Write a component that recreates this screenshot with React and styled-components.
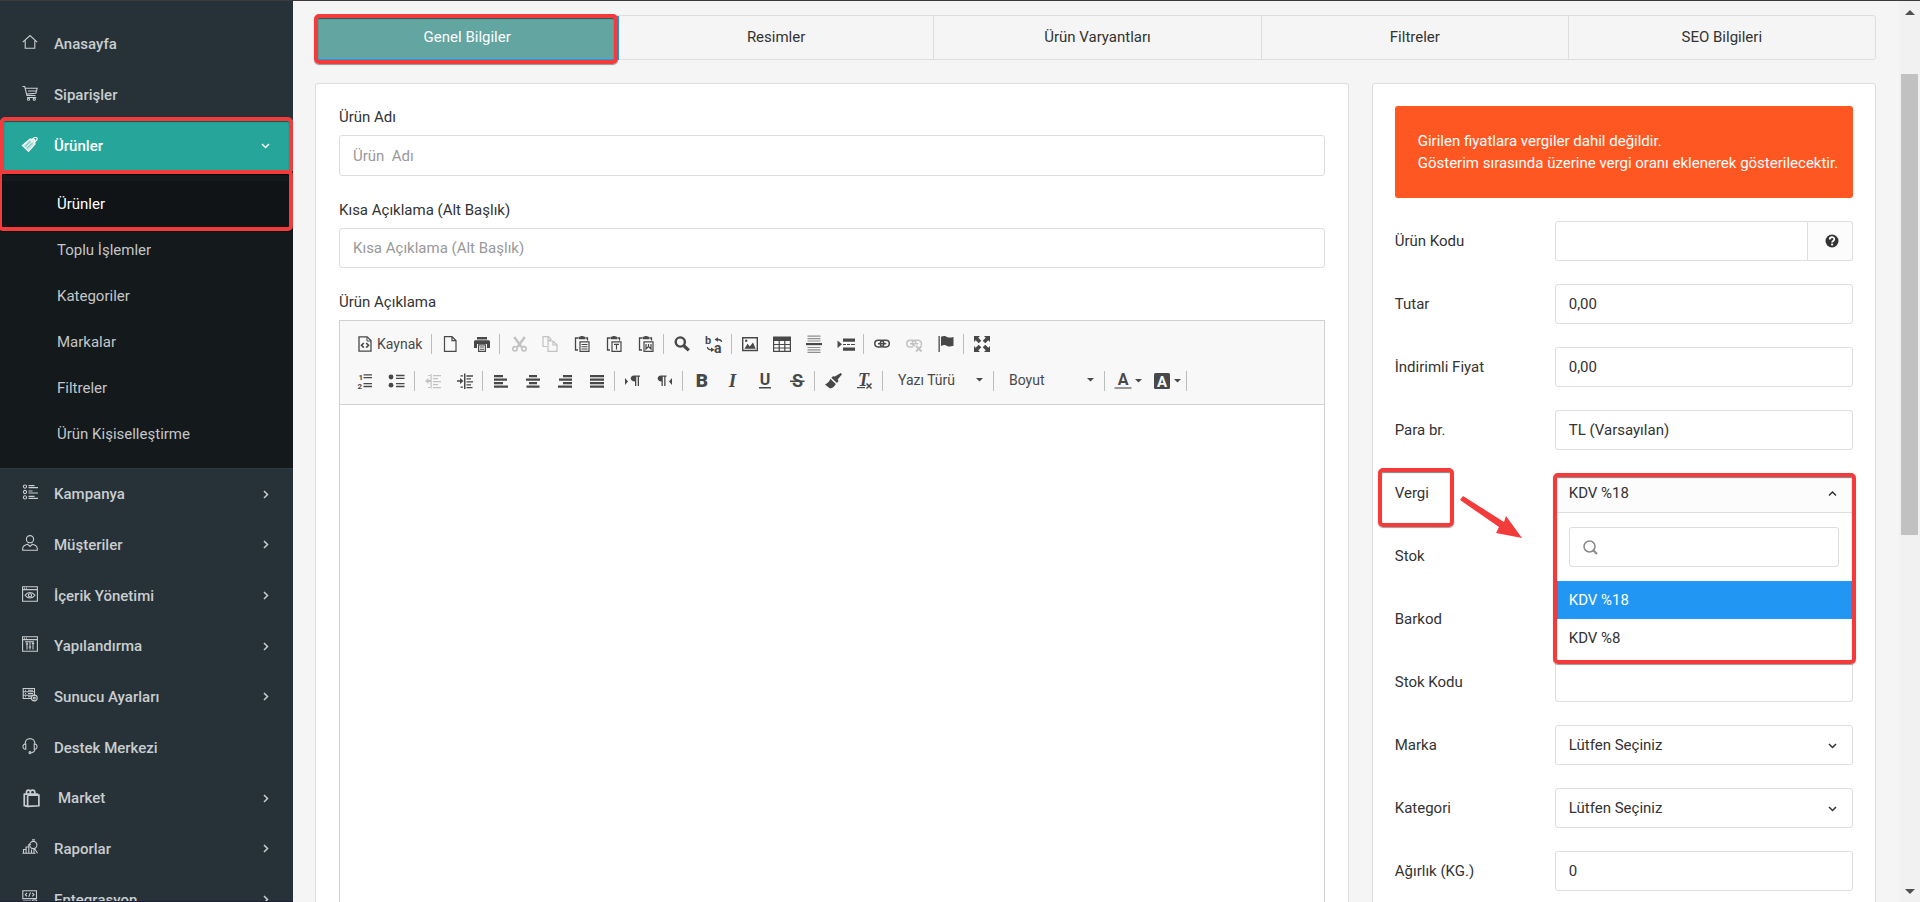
import React, { useState } from "react";
import styled, { createGlobalStyle } from "styled-components";

const GlobalStyle = createGlobalStyle`
    * {
        box-sizing: border-box;
    }
    body {
        margin: 0;
        overflow: hidden;
        background-color: #f5f5f5;
    }
    body, input, select, button, textarea {
        font-family: Roboto, "Liberation Sans", sans-serif;
        font-size: 15px;
        line-height: 22px;
        color: #333;
    }
`;

const Page = styled.div`
    display: flex;
    height: 100vh;
    overflow: hidden;
    border-top: 1px solid #3c3a3d;
`;

/* ---- sidebar ---- */

const Sidebar = styled.nav`
    flex: 0 0 293px;
    padding-top: 17px;
    overflow: hidden;
    background-color: #263238;
    border-bottom: 1px solid #1f2038;
`;

const MenuList = styled.ul`
    display: grid;
    grid-auto-rows: 1fr;
    height: ${props => props.$height}px;
    margin: 0;
    padding: 0;
    list-style: none;
`;

const MenuItem = styled.li`
    position: relative;
    display: flex;
`;

const MenuLink = styled.a`
    flex: 1;
    display: flex;
    align-items: center;
    gap: ${props => props.$wide ? '18px' : '16px'};
    padding: 0 23px 0 22px;
    font-weight: 500;
    color: ${props => props.$active ? '#fff' : '#c9cdcf'};
    background-color: ${props => props.$active ? '#26a69a' : 'transparent'};
    text-decoration: none;

    svg:first-child {
        margin-bottom: ${props => props.$wide ? '0' : '4px'};
    }
    svg:last-child {
        margin-left: auto;
    }
`;

const SubMenu = styled.ul`
    margin: 0;
    padding: 10px 0 11px;
    list-style: none;
    background-color: #14191c;
    border-bottom: 1px solid #303b41;
`;

const SubItem = styled.li`
    position: relative;
    background-color: ${props => props.$active ? '#101416' : 'transparent'};
`;

const SubLink = styled.a`
    display: block;
    padding: 12px 24px 12px 57px;
    color: ${props => props.$active ? '#fff' : '#c4c6c7'};
    text-decoration: none;
`;

const Highlight = styled.span`
    position: absolute;
    z-index: 5;
    inset: ${props => props.$inset};
    border: 4px solid #f43b3b;
    border-radius: 5px;
    box-shadow: 0 1px 1px rgba(0, 0, 0, 0.4), inset 0 1px 1px rgba(0, 0, 0, 0.5);
    pointer-events: none;
`;

/* ---- content ---- */

const Content = styled.main`
    flex: 1;
    min-width: 0;
    padding: 14px 23px 0 22px;
`;

const Tabs = styled.div`
    display: grid;
    grid-template-columns: 304fr 315fr 329fr 307fr 307fr;
    height: 45px;
    margin-bottom: 23px;
    border: 1px solid #ddd;
    border-radius: 3px;
`;

const Tab = styled.button`
    position: relative;
    padding: 0 0 2px;
    border: none;
    border-right: 1px solid #ddd;
    background-color: transparent;
    cursor: pointer;

    &:last-child {
        border-right: none;
    }
    ${props => props.$active && `
        color: #fff;
        background-color: #62a5a1;
        border-right-color: #2196f3;
        box-shadow: 0 1px 0 #2196f3;
    `}
`;

const Columns = styled.div`
    display: grid;
    grid-template-columns: 41fr 20fr;
    gap: 23px;
`;

const Card = styled.section`
    min-width: 0;
    padding: 22px ${props => props.$narrow ? '22px' : '23px'};
    border: 1px solid #ddd;
    border-radius: 3px;
    background-color: #fff;
`;

const Group = styled.div`
    display: flex;
    flex-direction: column;
    gap: 7px;
    margin-bottom: 23px;
`;

const Input = styled.input`
    width: 100%;
    min-width: 0;
    height: ${props => props.$tall ? '41px' : '40px'};
    padding: 0 13px;
    border: 1px solid #ddd;
    border-radius: 3px;
    background-color: #fff;
    outline: none;

    &::placeholder {
        color: #999;
        opacity: 1;
    }
`;

/* ---- editor ---- */

const Editor = styled.div`
    border: 1px solid #d1d1d1;
`;

const Toolbar = styled.div`
    display: flex;
    flex-direction: column;
    gap: 5px;
    padding: 7px 9px;
    border-bottom: 1px solid #d1d1d1;
    background-color: #f8f8f8;
`;

const ToolRow = styled.div`
    display: flex;
    align-items: center;
    height: 32px;
`;

const ToolGroup = styled.div`
    display: flex;
    align-items: center;
    height: 20px;
    padding-right: ${props => props.$last ? '0' : '1px'};
    margin-right: 2px;
    border-right: ${props => props.$last ? 'none' : '1px solid #bcbcbc'};
`;

const ToolButton = styled.button`
    display: flex;
    align-items: center;
    gap: 4px;
    height: 32px;
    padding: 0 8px;
    border: none;
    background: none;
    font-size: 14px;
    color: #484848;
    opacity: ${props => props.disabled ? 0.3 : 1};

    svg:nth-child(2) {
        margin-right: -4px;
    }
`;

const Combo = styled.button`
    display: flex;
    align-items: center;
    justify-content: space-between;
    width: 107px;
    height: 32px;
    padding: 0 9px 2px 13px;
    border: none;
    background: none;
    font-size: 14px;
    color: #484848;
`;

const EditorArea = styled.textarea`
    display: block;
    width: 100%;
    height: 560px;
    padding: 20px;
    border: none;
    outline: none;
    resize: none;
`;

/* ---- right form ---- */

const Form = styled.div`
    display: flex;
    flex-direction: column;
    gap: 23px;
`;

const Alert = styled.div`
    padding: 24px 12px 24px 23px;
    border-radius: 3px;
    color: #fff;
    background-color: #ff5722;
`;

const Row = styled.div`
    display: grid;
    grid-template-columns: 160px 1fr;
    align-items: center;
`;

const LabelCell = styled.div`
    position: relative;
    justify-self: start;
`;

const Field = styled.div`
    position: relative;
    display: flex;
    align-items: center;

    > svg {
        position: absolute;
        right: 16px;
        pointer-events: none;
    }
`;

const CodeInput = styled(Input)`
    border-radius: 3px 0 0 3px;
`;

const Addon = styled.button`
    flex: 0 0 45px;
    display: flex;
    align-items: center;
    justify-content: center;
    height: 40px;
    padding: 0 0 0 4px;
    border: 1px solid #ddd;
    border-left: none;
    border-radius: 0 3px 3px 0;
    background-color: #fcfcfc;
`;

const Select = styled.select`
    width: 100%;
    height: 40px;
    padding: 0 13px;
    border: 1px solid #ddd;
    border-radius: 3px;
    background-color: #fff;
    appearance: none;
    outline: none;
`;

const SelectButton = styled.button`
    width: 100%;
    height: 40px;
    padding: 0 13px;
    border: 1px solid #ddd;
    background-color: #fcfcfc;
    text-align: left;
`;

const Dropdown = styled.div`
    position: absolute;
    z-index: 4;
    top: 40px;
    left: 0;
    right: 0;
    padding-bottom: 7px;
    background-color: #fff;
`;

const SearchBox = styled.div`
    display: flex;
    align-items: center;
    height: 40px;
    margin: 14px;
    padding-left: 13px;
    border: 1px solid #ddd;
    border-radius: 3px;
`;

const SearchInput = styled.input`
    flex: 1;
    min-width: 0;
    padding: 0 10px;
    border: none;
    outline: none;
    background: none;
`;

const Options = styled.ul`
    margin: 0;
    padding: 0;
    list-style: none;
`;

const Option = styled.li`
    padding: 8px 14px;
    color: ${props => props.$selected ? '#fff' : '#333'};
    background-color: ${props => props.$selected ? '#2196f3' : 'transparent'};
    cursor: pointer;
`;

const ArrowSvg = styled.svg`
    position: absolute;
    z-index: 5;
    top: 14px;
    left: 65px;
`;

/* ---- scrollbar ---- */

const ScrollTrack = styled.div`
    flex: 0 0 21px;
    display: flex;
    flex-direction: column;
    align-items: center;
    justify-content: space-between;
    padding: 9px 0 8px;
    background-color: #f1f1f1;
`;

const ScrollSpace = styled.div`
    flex: 1;
    padding-top: 59px;
`;

const ScrollThumb = styled.div`
    width: 17px;
    height: 461px;
    background-color: #c1c1c1;
`;

/* line icons of the sidebar, 16x16 */
const menuIcons = {
    home: <path d="M.8 8.2 8 1.6l7.2 6.6M3.2 6.5v7.8h9.6V6.5" />,
    cart: <>
        <path d="M.5 1.5h2.2l2.2 9h8.6M3.2 3.3h12l-1.3 4.9-9.6.9M6 6h8.6" />
        <path d="M5.2 12.5h9" />
        <circle cx="6.5" cy="14.2" r="1.1" />
        <circle cx="12.3" cy="14.2" r="1.1" />
    </>,
    tag: <>
        <path d="M.5 9.5 8 3l4.600.4.4 4.600-6.500 7.500z" fill="currentColor" fillOpacity="0.75" />
        <path d="m2.600 10.800 5.700-5.400M4.600 12.800l5.800-5.600" stroke="#26a69a" strokeWidth="0.7" />
        <path d="M10 6.200c-.8-2.400 1.800-5.400 4.200-4.600 2 .8.8 3.600-2.800 4.900" />
    </>,
    list: <>
        <circle cx="3" cy="2.6" r="1.6" />
        <circle cx="3" cy="8" r="1.6" />
        <circle cx="3" cy="13.4" r="1.6" />
        <path d="M6.5 1.6h6M6.5 3.6H16M6.5 7h4M6.5 9H16M6.5 12.4h6M6.5 14.4H16" />
    </>,
    user: <>
        <circle cx="8" cy="4.2" r="3.6" />
        <path d="M.7 15.3v-1.8c0-2 2.4-3.6 5-4.2L8 11.5l2.3-2.2c2.600.6 5 2.200 5 4.200v1.800z" />
    </>,
    eye: <>
        <path d="M.6.8h14.800v14.400H.6zM.6 3.600h14.800M2 2.200h1M4 2.200h1" />
        <path d="M3 9.300c2.600-3.800 7.400-3.800 10 0-2.600 3.600-7.400 3.600-10 0z" />
        <circle cx="8" cy="9.300" r="1.600" />
    </>,
    config: <>
        <path d="M.6.8h14.800v14.400H.6zM.6 3.600h14.800M2 2.200h1M4 2.200h1" />
        <path d="M5 5.500v8M8 5.500v8M11 5.500v8M3.800 8h2.400M6.800 11h2.400M9.800 7.500h2.400M3 5.800h9" />
    </>,
    server: <>
        <path d="M1.200 1.500h11.300v3.300H1.200zM1.200 4.800h11.300v3.400H1.200zM9 11.500H1.200V8.200h8M3 3.200h1M6 3.200h5M3 6.500h1M6 6.500h5M3 9.800h1M6 9.800h3" />
        <circle cx="12.300" cy="11" r="2.900" />
        <circle cx="12.300" cy="11" r="1" />
    </>,
    headset: <>
        <path d="M3.200 6V5.500C3.200 2.600 5.300.6 8 .6s4.800 2 4.800 4.900V6M12.800 11.300c0 2-1.400 3.200-3.600 3.400" />
        <path d="M3.800 6c-1.800-.2-2.800 1-2.800 2.700s1 2.800 2.800 2.600zM12.200 6c1.800-.2 2.800 1 2.800 2.700s-1 2.800-2.800 2.600z" />
        <circle cx="8" cy="14.600" r="1" />
    </>,
    market: <>
        <path d="M1.500 4.500h12.800M2 4.500v10.300l3 .7V5.500M5 5.500h10v9.400l-10 .6M4 4.300V3c0-2.600 3.400-2.600 3.400 0v1.500M7.400 3c0-2.600 4-2.600 4 0v1.500" strokeWidth="1.500" />
    </>,
    chart: <>
        <path d="M.5 14.300h13M1.500 14V10.500h2.600V14M4.100 10.500V8h2.700v6M6.800 8.300V5.500h2M9.500 14v-3.500" />
        <circle cx="11.300" cy="6" r="3.600" />
        <path d="m12.500 9.500 3 4.800M10 .9h3M12 9.800v4.200" />
    </>,
    code: <>
        <path d="M.8.800h13.700v7.800H.800zM5 3 3.300 4.700 5 6.400M10.300 3 12 4.700l-1.700 1.700M8.500 2.500l-1.700 4.400M1 11h8M1 13h8M3 15h6" />
        <circle cx="12.500" cy="12.500" r="2.700" />
    </>,
};

/* editor toolbar icons, 16x16 */
const toolIcons = {
    source: <>
        <path d="M2 .8h8.200L14 4.500v10.700H2z" fill="none" stroke="currentColor" strokeWidth="1.300" />
        <path d="M10 1v4h4" fill="none" stroke="currentColor" />
        <path d="M6.800 7 4.500 9.300l2.300 2.300M9.200 7l2.300 2.300-2.300 2.300" fill="none" stroke="currentColor" strokeWidth="1.600" />
    </>,
    page: <path d="M2.500.7h7.500L14 4.600v10.700H2.500zM10 .7v4h4" fill="none" stroke="currentColor" strokeWidth="1.200" />,
    print: <>
        <path d="M3 1h10v2.500H3zM1.500 4.300h13c.8 0 1.500.6 1.500 1.400V12h-3V8H3v4H0V5.700c0-.8.7-1.400 1.500-1.400z" />
        <path d="M4.600 8.800h6.800v6.500H4.600z" fill="none" stroke="currentColor" strokeWidth="1.200" />
        <path d="M6 10.500h4v1H6zM6 12.700h4v1H6z" />
    </>,
    cut: <>
        <path d="M4.200 1 11.500 11M14.800 1 7.500 11" fill="none" stroke="currentColor" strokeWidth="2.400" />
        <circle cx="5" cy="12.800" r="2.200" fill="none" stroke="currentColor" strokeWidth="1.600" />
        <circle cx="14" cy="12.800" r="2.200" fill="none" stroke="currentColor" strokeWidth="1.600" />
    </>,
    copy: <path d="M5 10.500H1V.7h5.500l3 3M6 .8v3.400h3M6 5h5l4 3.800v6.500H6zM11 5v4h4" fill="none" stroke="currentColor" strokeWidth="1.200" />,
    paste: <>
        <path d="M4 2H1.500v12H4M12 2h1.500v2.500" fill="none" stroke="currentColor" strokeWidth="1.300" />
        <path d="M4.500.800h1.500L7 0h2l1 .800h1.500v2.500h-7z" />
        <path d="M6 5.800h9v9.600H6z" fill="none" stroke="currentColor" strokeWidth="1.200" />
        <path d="M7.500 8h6v1h-6zM7.500 10.200h6v1h-6zM7.500 12.400h6v1h-6z" />
    </>,
    pasteText: <>
        <path d="M4 2H1.500v12H4M12 2h1.500v2.500" fill="none" stroke="currentColor" strokeWidth="1.300" />
        <path d="M4.500.800h1.500L7 0h2l1 .800h1.500v2.500h-7z" />
        <path d="M6 5.800h9v9.600H6zM8 8.300h5M10.500 8.300v5.200" fill="none" stroke="currentColor" strokeWidth="1.200" />
    </>,
    pasteWord: <>
        <path d="M4 2H1.500v12H4M12 2h1.500v2.500" fill="none" stroke="currentColor" strokeWidth="1.300" />
        <path d="M4.500.800h1.500L7 0h2l1 .800h1.500v2.500h-7z" />
        <path d="M6 5.800h9v9.600H6zM8 8v5l2.500-2.500L13 13V8M10.500 8v3" fill="none" stroke="currentColor" strokeWidth="1.200" />
    </>,
    find: <>
        <circle cx="6.300" cy="6" r="4.600" fill="none" stroke="currentColor" strokeWidth="2.400" />
        <path d="m9.800 9.800 5 4.600" fill="none" stroke="currentColor" strokeWidth="3.200" />
    </>,
    replace: <>
        <text x="-1" y="8" fontSize="11" fontWeight="700">b</text>
        <text x="8" y="16.500" fontSize="14" fontWeight="700">a</text>
        <path d="M15.500 6c0-2-1.500-2.500-4-2.500M1.500 11c0 2 1.500 2.800 4 2.800" fill="none" stroke="currentColor" strokeWidth="1.300" />
        <path d="m12 1.200-3.500 2.300L12 5.800zM5 11.500l3.500 2.300L5 16z" />
    </>,
    image: <>
        <path d="M.7 1.700h14.600v12.800H.7z" fill="none" stroke="currentColor" strokeWidth="1.400" />
        <path d="m2.500 12.800 3-5 2.300 2.700L11 6.500l2.700 6.300z" />
        <circle cx="4.200" cy="4.800" r="1.200" />
    </>,
    table: <>
        <path d="M-1 .5h18V5H-1z" />
        <path d="M-.4 5v10.300h16.800V5M-.4 8.500h16.800M-.4 12h16.800M5.200 5v10.300M10.800 5v10.300" fill="none" stroke="currentColor" strokeWidth="1.200" />
    </>,
    rule: <>
        <path d="M1.500-.500h13v1.200h-13zM1.500 2h13v1.200h-13zM1.500 4.500h13v1h-13zM1.500 11h13v1h-13zM1.500 13.300h13v1.200h-13zM1.500 15.700h13V17h-13z" opacity="0.6" />
        <path d="M0 7h16v2.200H0z" />
    </>,
    pageBreak: <>
        <path d="M-.500 4.500 4 8.300-.500 12zM5 2.500h12v3.300H5zM5 11.500h12v3.300H5zM5 8h3v1H5zM9 8h3v1H9zM13 8h4v1h-4z" />
    </>,
    link: <>
        <rect x=".8" y="4.300" width="9" height="6.600" rx="3.300" fill="none" stroke="currentColor" strokeWidth="1.500" />
        <rect x="6.300" y="4.300" width="9" height="6.600" rx="3.300" fill="none" stroke="currentColor" strokeWidth="1.500" />
        <path d="M4 6.900h8.200v1.500H4z" />
    </>,
    unlink: <>
        <path d="M7 11H4.100C-.3 11-.3 4.300 4.100 4.300h2.400c2 0 3.300 1.400 3.300 3M9 10c-4-1-3.500-5.700.7-5.700H12c3 0 4.300 3 3 5M4 7.700h8" fill="none" stroke="currentColor" strokeWidth="1.500" />
        <path d="m10 10 5.500 5.500M15.500 10 10 15.500" fill="none" stroke="currentColor" strokeWidth="1.800" />
    </>,
    flag: <path d="M.5 0h1.300v16H.5zM3 .800c3-1.500 4.500-.8 6 .2 1.500.8 3.500.8 6.500 0v8.700c-3 1-5 1-6.500.2-1.600-1-3-1.300-6 0z" />,
    maximize: <path d="M0 0h6L4.300 1.700l3 3-2.600 2.600-3-3L0 6zM16 0v6l-1.700-1.700-3 3-2.600-2.600 3-3L10 0zM0 16v-6l1.700 1.700 3-3 2.600 2.600-3 3L6 16zM16 16h-6l1.700-1.700-3-3 2.600-2.600 3 3L16 10z" />,
    numbered: <>
        <text x="1.500" y="6.500" fontSize="8" fontWeight="700">1</text>
        <text x=".5" y="15.800" fontSize="8" fontWeight="700">2</text>
        <path d="M6.500 1.800H15M6.500 4.700H15M6.500 10.600H15M6.500 13.500H15" fill="none" stroke="currentColor" strokeWidth="1.300" />
    </>,
    bulleted: <>
        <circle cx="2" cy="4" r="2.400" />
        <circle cx="2" cy="12.200" r="2.400" />
        <path d="M7 2.500h8.500M7 5.300h8.500M7 10.700h8.500M7 13.500h8.500" fill="none" stroke="currentColor" strokeWidth="1.300" />
    </>,
    outdent: <>
        <path d="M5.500 1h1.200v14.500H5.500zM8 2h8v1.200H8zM8 5h5v1.200H8zM8 8h8v1.200H8zM8 11h5v1.200H8zM8 14h8v1.200H8z" />
        <path d="m0 8 3.500-3v2H6v2H3.500v2zM3 2h2v1H3zM3 14h2v1H3z" />
    </>,
    indent: <>
        <path d="M7 .5h1.500V16H7zM9.500 2.300H16v1.400H9.500zM9.500 5.200H14v1.400H9.500zM9.500 8.200H16v1.400H9.500zM9.500 11.200H14v1.400H9.500zM9.500 14h6v1.200h-6z" />
        <path d="M6.500 8 3 5v2.200H0v1.600h3V11zM3.500 2.300H6v1.200H3.500zM3.500 13.500H6v1.200H3.500z" />
    </>,
    left: <path d="M1 2h9v2.300H1zM1 5.500h13v2.300H1zM1 9h9v2.300H1zM1 12.500h14v2.300H1z" />,
    center: <path d="M4 2h8v2.300H4zM1 5.500h14v2.300H1zM4 9h8v2.300H4zM1.500 12.500h13v2.300h-13z" />,
    right: <path d="M6 2h9v2.300H6zM2 5.500h13v2.300H2zM6 9h9v2.300H6zM1 12.500h14v2.300H1z" />,
    justify: <path d="M1 2h14v2.300H1zM1 5.500h14v2.300H1zM1 9h14v2.300H1zM1 12.500h14v2.300H1z" />,
    ltr: <path d="m0 5 3 3.500L0 12zM15 2.500v1.200h-1v9.300h-1.300V3.700h-1.400V13H10V8.500C4.500 8.500 4.500 2.500 9 2.500z" />,
    rtl: <path d="m15 5-3 3.500 3 3.500zM9.500 2.500v1.200h-1v9.300H7.200V3.700H5.800V13H4.500V8.500C-.5 8.500-.5 2.500 4 2.500z" />,
    bold: <text x="9" y="14" fontSize="19" fontWeight="900" textAnchor="middle">B</text>,
    italic: <text x="7.500" y="14" fontSize="19" fontWeight="700" fontStyle="italic" fontFamily="Liberation Serif" textAnchor="middle">I</text>,
    underline: <>
        <text x="8" y="12" fontSize="16" fontWeight="700" textAnchor="middle">U</text>
        <path d="M2 14h12v1.500H2z" />
    </>,
    strike: <>
        <text x="8.500" y="14" fontSize="18" fontWeight="700" textAnchor="middle">S</text>
        <path d="M1 7.500h14.500V9H1z" />
    </>,
    brush: <path d="M15.800 0 17 1.300l-4.300 5.200L13.500 8 12 10 6.300 4.800 8 3.200l1.800.4zM5.300 5.700l5.500 5.200c-1.400 2.600-3.200 4.200-5.800 4.600L0 11.500c2.500-1.200 4.500-3 5.300-5.800z" />,
    removeFormat: <>
        <text x="6.500" y="13" fontSize="18" fontWeight="700" fontStyle="italic" fontFamily="Liberation Serif" textAnchor="middle">T</text>
        <path d="M0 14h8v1.200H0z" />
        <path d="m9.500 10.500 5 5M14.500 10.500l-5 5" fill="none" stroke="currentColor" strokeWidth="1.500" />
    </>,
    textColor: <>
        <text x="8" y="12" fontSize="16" fontWeight="700" textAnchor="middle">A</text>
        <path d="M-.5 14h17v2h-17z" opacity="0.55" />
    </>,
    bgColor: <>
        <rect width="16" height="16" rx="1.500" />
        <text x="8" y="13.500" fontSize="15" fontWeight="700" fill="#f8f8f8" textAnchor="middle">A</text>
    </>,
};

function MenuIcon({ name, size = 16 }) {
    return (
        <svg width={size} height={size} viewBox="0 0 16 16" fill="none" stroke="currentColor" strokeWidth="1.100" overflow="visible">
            {menuIcons[name]}
        </svg>
    );
}

function ToolIcon({ name }) {
    return (
        <svg width="16" height="16" viewBox="0 0 16 16" fill="currentColor" overflow="visible">
            {toolIcons[name]}
        </svg>
    );
}

function Chevron({ dir }) {
    const d = {
        right: "m3 1 3.500 3.500L3 8",
        down: "m1 3 3.500 3.500L8 3",
        up: "M1 6.500 4.500 3 8 6.500",
    };
    return (
        <svg width="9" height="9" viewBox="0 0 9 9" fill="none" stroke="currentColor" strokeWidth="1.500">
            <path d={d[dir]} />
        </svg>
    );
}

function Caret() {
    return (
        <svg width="7" height="4" viewBox="0 0 7 4">
            <path d="M0 0h7L3.500 3.500z" fill="#484848" />
        </svg>
    );
}

const topMenu = [
    { text: "Anasayfa", icon: "home" },
    { text: "Siparişler", icon: "cart" },
    { text: "Ürünler", icon: "tag", active: true },
];

const subMenu = ["Ürünler", "Toplu İşlemler", "Kategoriler", "Markalar", "Filtreler", "Ürün Kişiselleştirme"];

const bottomMenu = [
    { text: "Kampanya", icon: "list", arrow: true },
    { text: "Müşteriler", icon: "user", arrow: true },
    { text: "İçerik Yönetimi", icon: "eye", arrow: true },
    { text: "Yapılandırma", icon: "config", arrow: true },
    { text: "Sunucu Ayarları", icon: "server", arrow: true },
    { text: "Destek Merkezi", icon: "headset" },
    { text: "Market", icon: "market", arrow: true, wide: true },
    { text: "Raporlar", icon: "chart", arrow: true },
    { text: "Entegrasyon", icon: "code", arrow: true },
];

const tabs = ["Genel Bilgiler", "Resimler", "Ürün Varyantları", "Filtreler", "SEO Bilgileri"];

const toolRow1 = [
    ["page", "print"],
    ["cut", "copy", "paste", "pasteText", "pasteWord"],
    ["find", "replace"],
    ["image", "table", "rule", "pageBreak"],
    ["link", "unlink", "flag"],
    ["maximize"],
];

const toolRow2 = [
    ["numbered", "bulleted"],
    ["outdent", "indent"],
    ["left", "center", "right", "justify"],
    ["ltr", "rtl"],
    ["bold", "italic", "underline", "strike"],
    ["brush", "removeFormat"],
];

const disabledTools = ["cut", "copy", "unlink", "outdent"];

function ToolGroups({ groups, openEnd }) {
    return groups.map((group, i) => (
        <ToolGroup key={i} $last={openEnd && i === groups.length - 1}>
            {group.map(name => (
                <ToolButton key={name} type="button" aria-label={name} disabled={disabledTools.includes(name)}>
                    <ToolIcon name={name} />
                </ToolButton>
            ))}
        </ToolGroup>
    ));
}

function SideMenu() {
    return (
        <Sidebar>
            <MenuList $height={153}>
                {topMenu.map(item => (
                    <MenuItem key={item.text}>
                        <MenuLink href="#" $active={item.active}>
                            <MenuIcon name={item.icon} />
                            <span>{item.text}</span>
                            {item.active && <Chevron dir="down" />}
                        </MenuLink>
                        {item.active && <Highlight $inset="-3px 0" />}
                    </MenuItem>
                ))}
            </MenuList>
            <SubMenu>
                {subMenu.map((text, i) => (
                    <SubItem key={text} $active={i === 0}>
                        <SubLink href="#" $active={i === 0}>{text}</SubLink>
                        {i === 0 && <Highlight $inset="-11px 0 -4px -2px" />}
                    </SubItem>
                ))}
            </SubMenu>
            <MenuList $height={456}>
                {bottomMenu.map(item => (
                    <MenuItem key={item.text}>
                        <MenuLink href="#" $wide={item.wide}>
                            <MenuIcon name={item.icon} size={item.wide ? 18 : 16} />
                            <span>{item.text}</span>
                            {item.arrow && <Chevron dir="right" />}
                        </MenuLink>
                    </MenuItem>
                ))}
            </MenuList>
        </Sidebar>
    );
}

function TextEditor() {
    return (
        <Editor>
            <Toolbar>
                <ToolRow>
                    <ToolGroup>
                        <ToolButton type="button">
                            <ToolIcon name="source" />
                            <span>Kaynak</span>
                        </ToolButton>
                    </ToolGroup>
                    <ToolGroups groups={toolRow1} openEnd />
                </ToolRow>
                <ToolRow>
                    <ToolGroups groups={toolRow2} />
                    <ToolGroup>
                        <Combo type="button">Yazı Türü<Caret /></Combo>
                    </ToolGroup>
                    <ToolGroup>
                        <Combo type="button">Boyut<Caret /></Combo>
                    </ToolGroup>
                    <ToolGroup>
                        <ToolButton type="button" aria-label="Yazı Rengi">
                            <ToolIcon name="textColor" />
                            <Caret />
                        </ToolButton>
                        <ToolButton type="button" aria-label="Arka Plan Rengi">
                            <ToolIcon name="bgColor" />
                            <Caret />
                        </ToolButton>
                    </ToolGroup>
                </ToolRow>
            </Toolbar>
            <EditorArea id="aciklama" />
        </Editor>
    );
}

function FormRow({ id, label, children }) {
    return (
        <Row>
            <LabelCell><label htmlFor={id}>{label}</label></LabelCell>
            <Field>{children}</Field>
        </Row>
    );
}

function TaxRow() {
    const [tax, setTax] = useState("KDV %18");

    return (
        <Row>
            <LabelCell>
                <label htmlFor="vergi">Vergi</label>
                <Highlight $inset="-14px -25px -23px -17px" />
                <ArrowSvg width="64" height="44" viewBox="0 0 64 44">
                    <path d="M3 0 0 4l39 27-3 6 26 5L46 20l-2 6z" fill="#f43b3b" />
                </ArrowSvg>
            </LabelCell>
            <Field>
                <SelectButton id="vergi" type="button" aria-haspopup="listbox" aria-expanded="true">{tax}</SelectButton>
                <Chevron dir="up" />
                <Dropdown>
                    <SearchBox>
                        <svg width="15" height="15" viewBox="0 0 15 15" fill="none" stroke="#888" strokeWidth="1.500">
                            <circle cx="6.500" cy="6.500" r="5.500" />
                            <path d="m10 10 4 4" strokeWidth="2" />
                        </svg>
                        <SearchInput type="search" aria-label="Ara" />
                    </SearchBox>
                    <Options role="listbox">
                        {["KDV %18", "KDV %8"].map(option => (
                            <Option
                                key={option}
                                role="option"
                                aria-selected={option === tax}
                                $selected={option === tax}
                                onClick={() => setTax(option)}
                            >
                                {option}
                            </Option>
                        ))}
                    </Options>
                </Dropdown>
                <Highlight $inset="0 -3px -151px -2px" />
            </Field>
        </Row>
    );
}

function App() {
    const [activeTab, setActiveTab] = useState(0);

    return (
        <>
            <GlobalStyle />
            <Page>
                <SideMenu />
                <Content>
                    <Tabs role="tablist">
                        {tabs.map((text, i) => (
                            <Tab key={text} role="tab" $active={i === activeTab} onClick={() => setActiveTab(i)}>
                                {text}
                                {i === 0 && <Highlight $inset="-2px 0 -5px -2px" />}
                            </Tab>
                        ))}
                    </Tabs>
                    <Columns>
                        <Card>
                            <Group>
                                <label htmlFor="ad">Ürün Adı</label>
                                <Input id="ad" $tall placeholder="Ürün  Adı" />
                            </Group>
                            <Group>
                                <label htmlFor="kisa">Kısa Açıklama (Alt Başlık)</label>
                                <Input id="kisa" placeholder="Kısa Açıklama (Alt Başlık)" />
                            </Group>
                            <Group>
                                <label htmlFor="aciklama">Ürün Açıklama</label>
                                <TextEditor />
                            </Group>
                        </Card>
                        <Card $narrow>
                            <Form>
                                <Alert>
                                    Girilen fiyatlara vergiler dahil değildir.<br />
                                    Gösterim sırasında üzerine vergi oranı eklenerek gösterilecektir.
                                </Alert>
                                <FormRow id="kod" label="Ürün Kodu">
                                    <CodeInput id="kod" />
                                    <Addon type="button" aria-label="Yardım">
                                        <svg width="14" height="14" viewBox="0 0 14 14">
                                            <circle cx="7" cy="7" r="6.500" fill="#333" />
                                            <path d="M4.700 5.500C4.700 2.400 9.300 2.400 9.300 5.200 9.300 7 7.100 6.800 7.100 8.500" fill="none" stroke="#fff" strokeWidth="1.800" />
                                            <path d="M6.100 9.600h2v1.800h-2z" fill="#fff" />
                                        </svg>
                                    </Addon>
                                </FormRow>
                                <FormRow id="tutar" label="Tutar">
                                    <Input id="tutar" defaultValue="0,00" />
                                </FormRow>
                                <FormRow id="indirim" label="İndirimli Fiyat">
                                    <Input id="indirim" defaultValue="0,00" />
                                </FormRow>
                                <FormRow id="para" label="Para br.">
                                    <Input id="para" defaultValue="TL (Varsayılan)" />
                                </FormRow>
                                <TaxRow />
                                <FormRow id="stok" label="Stok">
                                    <Input id="stok" />
                                </FormRow>
                                <FormRow id="barkod" label="Barkod">
                                    <Input id="barkod" />
                                </FormRow>
                                <FormRow id="stokkodu" label="Stok Kodu">
                                    <Input id="stokkodu" />
                                </FormRow>
                                <FormRow id="marka" label="Marka">
                                    <Select id="marka"><option>Lütfen Seçiniz</option></Select>
                                    <Chevron dir="down" />
                                </FormRow>
                                <FormRow id="kategori" label="Kategori">
                                    <Select id="kategori"><option>Lütfen Seçiniz</option></Select>
                                    <Chevron dir="down" />
                                </FormRow>
                                <FormRow id="agirlik" label="Ağırlık (KG.)">
                                    <Input id="agirlik" defaultValue="0" />
                                </FormRow>
                            </Form>
                        </Card>
                    </Columns>
                </Content>
                <ScrollTrack>
                    <svg width="10" height="5" viewBox="0 0 10 5"><path d="m0 5 5-5 5 5z" fill="#505050" /></svg>
                    <ScrollSpace><ScrollThumb /></ScrollSpace>
                    <svg width="10" height="5" viewBox="0 0 10 5"><path d="m0 0 5 5 5-5z" fill="#505050" /></svg>
                </ScrollTrack>
            </Page>
        </>
    );
}

export default App;
